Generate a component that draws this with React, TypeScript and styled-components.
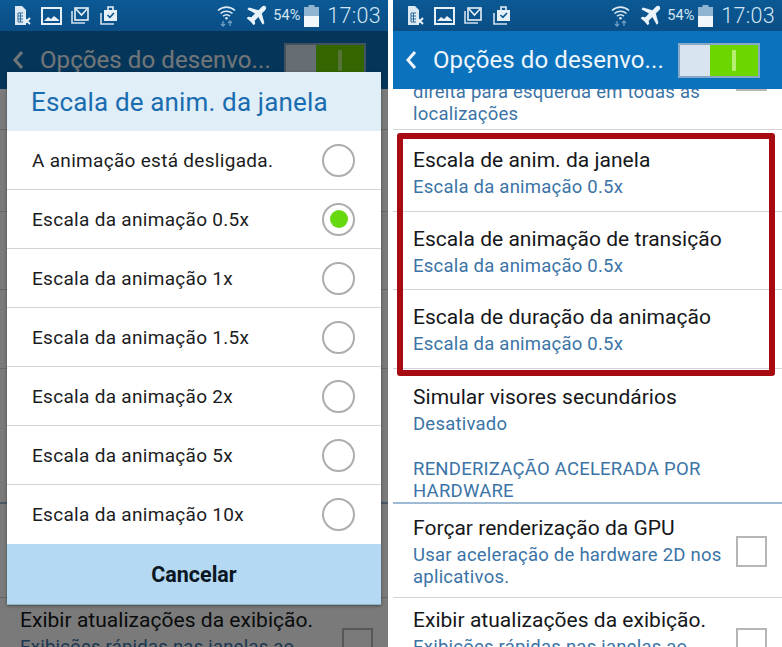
import React from 'react'
import styled, {createGlobalStyle} from 'styled-components'

const GlobalStyle = createGlobalStyle`
  html, body {
    margin: 0;
    padding: 0;
    background: #ffffff;
    font-family: 'Roboto', 'Liberation Sans', sans-serif;
  }
`
const Page = styled.div`
  display: grid;
  grid-template-columns: 388px 389px;
  column-gap: 5px;
  width: 782px;
  height: 647px;
  overflow: hidden;
  background: #ffffff;
`
const Phone = styled.div`
  position: relative;
  display: flex;
  flex-direction: column;
  height: 647px;
  overflow: hidden;
  background: #ffffff;
`
const StatusBar = styled.div`
  display: flex;
  align-items: center;
  justify-content: space-between;
  flex: none;
  height: 31px;
  padding: 0 7px 0 14px;
  background: linear-gradient(#0b5995, #0a4e85);
  color: #d3e6f3;
  position: relative;
  z-index: 3;
`
const StatusGroup = styled.div`
  display: flex;
  align-items: center;
`
const Glyph = styled.svg<{$ml?: number}>`
  flex: none;
  margin-left: ${({$ml}) => $ml ?? 0}px;
`
const Percent = styled.span`
  font-size: 14.5px;
  margin-left: 6px;
`
const Clock = styled.span`
  font-size: 21.5px;
  font-weight: 300;
  margin-left: 8px;
  letter-spacing: 0.3px;
`
const ActionBar = styled.div`
  display: flex;
  align-items: center;
  flex: none;
  height: 58px;
  padding: 0 22px 0 12px;
  background: #0b72bd;
  color: #eef6fb;
`
const BackIcon = styled.svg`
  width: 12px;
  height: 20px;
  flex: none;
`
const BarTitle = styled.div`
  flex: 1;
  min-width: 0;
  margin-left: 16px;
  font-size: 24px;
  letter-spacing: 0.08px;
  white-space: nowrap;
`
const Toggle = styled.div`
  display: flex;
  justify-content: flex-end;
  flex: none;
  width: 82px;
  height: 35px;
  box-sizing: border-box;
  border: 2px solid #86a9c7;
  background: #d8e5f1;
`
const ToggleThumb = styled.div`
  display: flex;
  align-items: center;
  justify-content: center;
  width: 48px;
  background: #6bd600;
  &::after {
    content: '';
    width: 4px;
    height: 21px;
    border-radius: 1px;
    background: #b6ee72;
  }
`
const ListViewport = styled.div`
  flex: 1;
  min-height: 0;
  overflow: hidden;
`
const List = styled.div`
  margin-top: -8px;
`
const Row = styled.div<{$height: number; $noLine?: boolean}>`
  display: flex;
  align-items: center;
  justify-content: space-between;
  box-sizing: border-box;
  height: ${({$height}) => $height}px;
  padding: 3px 15px 0 20px;
  border-bottom: ${({$noLine}) => ($noLine ? '0' : '1px solid #d3d5d8')};
`
const ClippedRow = styled(Row)`
  padding-top: 0;
  padding-bottom: 5px;
  margin-bottom: 3px;
`
const RowText = styled.div`
  display: flex;
  flex-direction: column;
  gap: 4px;
  white-space: nowrap;
`
const BottomRowText = styled(RowText)`
  align-self: flex-start;
  margin-top: 7px;
`
const RowTitle = styled.div`
  font-size: 21px;
  line-height: 24px;
  letter-spacing: 0.03px;
  color: #15171a;
`
const RowSub = styled.div`
  font-size: 18.5px;
  line-height: 22px;
  letter-spacing: 0.23px;
  color: #3b74a6;
  white-space: nowrap;
`
const SectionHead = styled.div`
  box-sizing: border-box;
  height: 56px;
  padding-top: 10px;
  padding-left: 20px;
  font-size: 18.5px;
  line-height: 22px;
  letter-spacing: 0.23px;
  color: #3b74a6;
  border-bottom: 2px solid #9db9d3;
  overflow: hidden;
`
const CheckBox = styled.div`
  flex: none;
  width: 31px;
  height: 31px;
  box-sizing: border-box;
  border: 2px solid #b4b6b8;
`
const ClippedCheckBox = styled(CheckBox)`
  align-self: flex-start;
  margin-top: -21px;
`
const Highlight = styled.div`
  position: absolute;
  top: 133px;
  left: 4px;
  width: 378px;
  height: 243px;
  box-sizing: border-box;
  border: 6px solid #a80a12;
  border-radius: 3px;
  pointer-events: none;
`
const Scrim = styled.div`
  position: absolute;
  top: 31px;
  left: 0;
  right: 0;
  bottom: 0;
  z-index: 2;
  padding: 41px 7px 0;
  background: rgba(0, 0, 0, 0.52);
`
const Dialog = styled.div`
  display: flex;
  flex-direction: column;
  background: #ffffff;
  box-shadow: 0 1px 3px rgba(0, 0, 0, 0.4);
`
const DialogTitle = styled.div`
  display: flex;
  align-items: center;
  height: 59px;
  padding-left: 24px;
  background: #e0eef7;
  color: #1a6cb0;
  font-size: 26px;
  letter-spacing: 0.15px;
`
const Option = styled.div<{$last?: boolean}>`
  display: flex;
  align-items: center;
  justify-content: space-between;
  box-sizing: border-box;
  height: 59px;
  padding: 0 26px 0 25px;
  border-bottom: ${({$last}) => ($last ? '0' : '1px solid #d4d4d4')};
  font-size: 19px;
  letter-spacing: 0.3px;
  color: #1b1c1e;
`
const Radio = styled.div`
  display: flex;
  align-items: center;
  justify-content: center;
  width: 33px;
  height: 33px;
  box-sizing: border-box;
  border: 2px solid #adadad;
  border-radius: 50%;
`
const RadioDot = styled.div`
  width: 18px;
  height: 18px;
  border-radius: 50%;
  background: #66d90e;
`
const CancelButton = styled.div`
  display: flex;
  align-items: center;
  justify-content: center;
  height: 61px;
  background: #b5d9f2;
  border-bottom: 1px solid #8fb0c6;
  box-sizing: border-box;
  font-size: 21.5px;
  font-weight: 700;
  color: #0a1622;
`

const SimIcon = () => (
    <Glyph width="17" height="21" viewBox="0 0 17 21">
        <path d="M1 1h7l4 4v15H1z" fill="#dce9f3"/>
        <path d="M4 8h5M4 11h5M4 14h5M4 17h5M4 8v9M6.500 8v9" stroke="#2d6c9f" strokeWidth="1" fill="none"/>
        <path d="M10 13l6 6M16 13l-6 6" stroke="#e6f0f7" strokeWidth="2"/>
    </Glyph>
)
const PictureIcon = () => (
    <Glyph $ml={10} width="21" height="18" viewBox="0 0 21 18">
        <rect x="1" y="1" width="19" height="16" fill="none" stroke="#e6f0f7" strokeWidth="2"/>
        <path d="M3 14l4-4 3 2 3-3 5 4v1H3z" fill="#e6f0f7"/>
    </Glyph>
)
const MailIcon = () => (
    <Glyph $ml={9} width="18" height="17" viewBox="0 0 18 17">
        <path d="M1 4v12h13" fill="none" stroke="#cfe0ee" strokeWidth="1.6"/>
        <rect x="4" y="1" width="13" height="12" fill="none" stroke="#e6f0f7" strokeWidth="1.6"/>
        <path d="M5 2l5.500 6L16 2" fill="none" stroke="#e6f0f7" strokeWidth="1.6"/>
    </Glyph>
)
const ClipboardIcon = () => (
    <Glyph $ml={11} width="18" height="19" viewBox="0 0 18 19">
        <path d="M1 7v11h13" fill="none" stroke="#cfe0ee" strokeWidth="1.6"/>
        <path d="M4 4h13v11H4z" fill="#e6f0f7"/>
        <path d="M8 4V1h5v3" fill="none" stroke="#e6f0f7" strokeWidth="1.6"/>
        <path d="M7.500 9l2.400 2.400L14 7" fill="none" stroke="#0b5591" strokeWidth="1.6"/>
    </Glyph>
)
const WifiIcon = () => (
    <Glyph width="19" height="22" viewBox="0 0 19 22">
        <path d="M1 5.500C6 1 13 1 18 5.500M3.500 8.500C7 5.500 12 5.500 15.500 8.500M6 11.200c2-1.600 5-1.600 7 0" fill="none" stroke="#dce9f3" strokeWidth="1.6"/>
        <circle cx="9.500" cy="13.200" r="1.300" fill="#dce9f3"/>
        <path d="M6 16v5M4 19l2 2 2-2M13 21v-5M11 18l2-2 2 2" fill="none" stroke="#6f9fc4" strokeWidth="1.300"/>
    </Glyph>
)
const PlaneIcon = () => (
    <Glyph $ml={9} width="22" height="22" viewBox="0 0 22 22">
        <path d="M20.600 1.400c-1-1-2.800-.6-3.900.5L13.400 5.200 4 2.600 2.300 4.300 10 8.600 6.300 12.300 3.200 11.800 1.700 13.300 5.500 16.500 8.700 20.300 10.200 18.800 9.700 15.700 13.400 12 17.700 19.700 19.400 18 16.800 8.600 20.100 5.300c1.100-1.100 1.500-2.900.5-3.900z" fill="#eaf3f9"/>
    </Glyph>
)
const BatteryIcon = () => (
    <Glyph $ml={4} width="15" height="22" viewBox="0 0 15 22">
        <rect x="4.500" y="0" width="6" height="2" fill="#8fb5d2"/>
        <rect x="0" y="2" width="15" height="9" fill="#8fb5d2"/>
        <rect x="0" y="11" width="15" height="11" fill="#f2f7fb"/>
    </Glyph>
)

const StatusRow: React.FC = () => (
    <StatusBar>
        <StatusGroup>
            <SimIcon/>
            <PictureIcon/>
            <MailIcon/>
            <ClipboardIcon/>
        </StatusGroup>
        <StatusGroup>
            <WifiIcon/>
            <PlaneIcon/>
            <Percent>54%</Percent>
            <BatteryIcon/>
            <Clock>17:03</Clock>
        </StatusGroup>
    </StatusBar>
)

const scaleRows = [
    'Escala de anim. da janela',
    'Escala de animação de transição',
    'Escala de duração da animação',
]

const options = [
    'A animação está desligada.',
    'Escala da animação 0.5x',
    'Escala da animação 1x',
    'Escala da animação 1.5x',
    'Escala da animação 2x',
    'Escala da animação 5x',
    'Escala da animação 10x',
]

const SettingsScreen: React.FC<{highlight?: boolean}> = ({highlight}) => (
    <>
        <StatusRow/>
        <ActionBar>
            <BackIcon viewBox="0 0 12 20">
                <path d="M10 2L3 10l7 8" fill="none" stroke="currentColor" strokeWidth="3"/>
            </BackIcon>
            <BarTitle>Opções do desenvo...</BarTitle>
            <Toggle><ToggleThumb/></Toggle>
        </ActionBar>
        <ListViewport>
            <List>
                <ClippedRow $height={49}>
                    <RowSub>direita para esquerda em todas as<br/>localizações</RowSub>
                    <ClippedCheckBox/>
                </ClippedRow>
                {scaleRows.map(title => (
                    <Row key={title} $height={78.5}>
                        <RowText>
                            <RowTitle>{title}</RowTitle>
                            <RowSub>Escala da animação 0.5x</RowSub>
                        </RowText>
                    </Row>
                ))}
                <Row $height={79} $noLine>
                    <RowText>
                        <RowTitle>Simular visores secundários</RowTitle>
                        <RowSub>Desativado</RowSub>
                    </RowText>
                </Row>
                <SectionHead>RENDERIZAÇÃO ACELERADA POR<br/>HARDWARE</SectionHead>
                <Row $height={94}>
                    <RowText>
                        <RowTitle>Forçar renderização da GPU</RowTitle>
                        <RowSub>Usar aceleração de hardware 2D nos<br/>aplicativos.</RowSub>
                    </RowText>
                    <CheckBox/>
                </Row>
                <Row $height={89} $noLine>
                    <BottomRowText>
                        <RowTitle>Exibir atualizações da exibição.</RowTitle>
                        <RowSub>Exibições rápidas nas janelas ao</RowSub>
                    </BottomRowText>
                    <CheckBox/>
                </Row>
            </List>
        </ListViewport>
        {highlight && <Highlight/>}
    </>
)

const App: React.FC = () => {
    return (
        <Page>
            <GlobalStyle/>
            <Phone>
                <SettingsScreen/>
                <Scrim>
                    <Dialog>
                        <DialogTitle>Escala de anim. da janela</DialogTitle>
                        {options.map((label, i) => (
                            <Option key={label} $last={i === options.length - 1}>
                                {label}
                                <Radio>{i === 1 && <RadioDot/>}</Radio>
                            </Option>
                        ))}
                        <CancelButton>Cancelar</CancelButton>
                    </Dialog>
                </Scrim>
            </Phone>
            <Phone>
                <SettingsScreen highlight/>
            </Phone>
        </Page>
    )
}

export default App
